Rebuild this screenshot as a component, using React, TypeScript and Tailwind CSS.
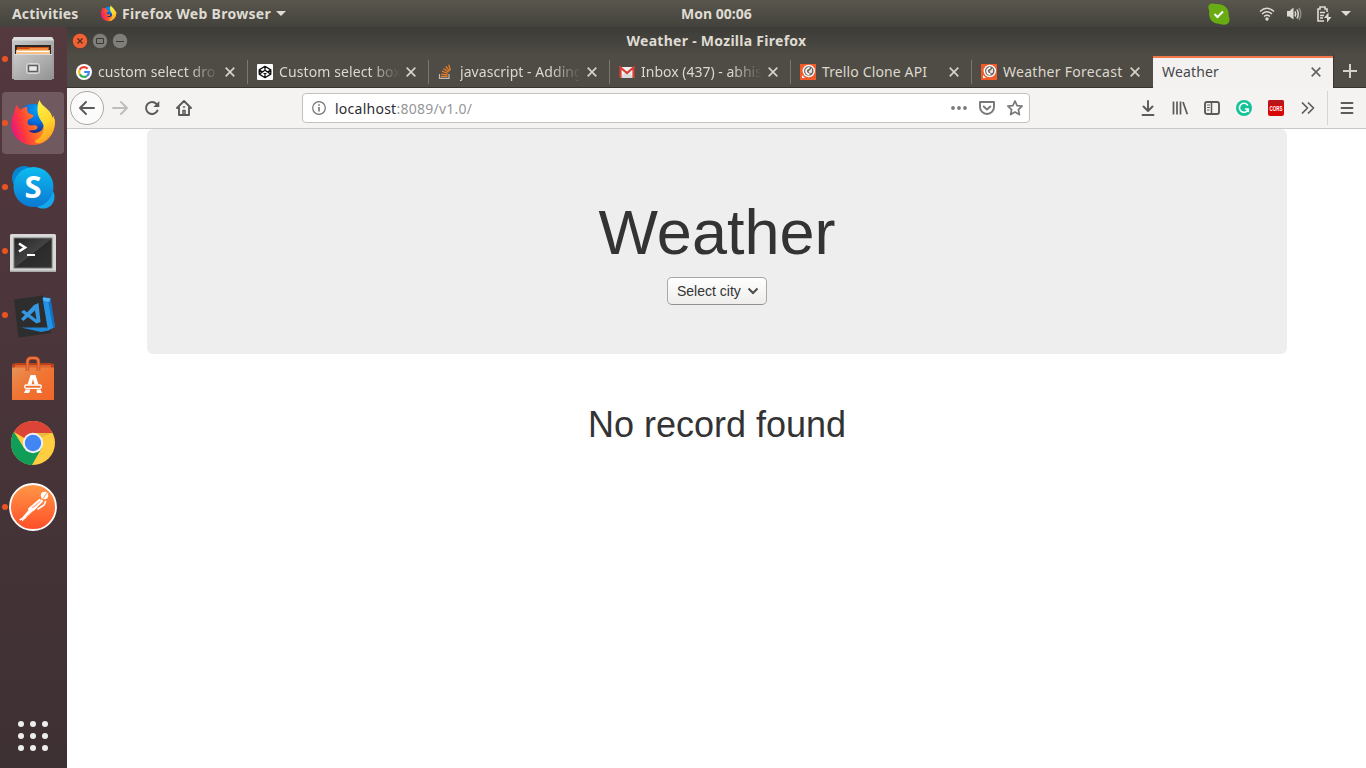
import React from "react";

type IconProps = { s?: number };

function Firefox({ s = 48 }: IconProps) {
  return (
    <svg className="shrink-0" width={s} height={s} viewBox="0 0 48 48">
      <defs>
        <linearGradient id="fxBody" x1="0.05" y1="0.7" x2="0.95" y2="0.45">
          <stop offset="0" stopColor="#e8187c" />
          <stop offset="0.25" stopColor="#ff3a3c" />
          <stop offset="0.6" stopColor="#ff7a22" />
          <stop offset="1" stopColor="#ffb522" />
        </linearGradient>
        <linearGradient id="fxTail" x1="0.3" y1="0" x2="0.6" y2="1">
          <stop offset="0" stopColor="#fff34a" />
          <stop offset="0.55" stopColor="#ffd52b" />
          <stop offset="1" stopColor="#ff981f" />
        </linearGradient>
        <radialGradient id="fxGlobe" cx="0.65" cy="0.15" r="0.75">
          <stop offset="0" stopColor="#00a7f5" />
          <stop offset="0.5" stopColor="#0570e0" />
          <stop offset="1" stopColor="#20207a" />
        </radialGradient>
      </defs>
      <circle cx="24" cy="22" r="17" fill="url(#fxGlobe)" />
      <path d="M8 5.500C8 8 9.500 9.500 11.500 10.500C14 8.500 16.500 8 18.500 8C17.500 10 18 12.500 20 14.500L24.500 16C24.500 18 22.500 19.500 19 21L18.500 24C20 28 24 25.500 27 26.500C30 28 28 31 25 31C23 31 21 32 19 31.500C23 35 29 34.500 33 31L36 24L46 20C47 34 38 46 24 46C11 46 1 36 2.500 22C3 18 4.500 15 5.500 13C5.500 10 6.500 7.500 8 5.500Z" fill="url(#fxBody)" />
      <path d="M30.500 1C32 6 37 8 40.500 12.500C42.500 15 43 17 43.500 19L44.500 16.500C48 27 44 38 33 43.500C29 45 26 44 26 42C34 38 36.500 31 34 25C31.500 20 28.500 18 28.500 10.500C28.500 6 29 3.500 30.500 1Z" fill="url(#fxTail)" />
    </svg>
  );
}

function Files() {
  return (
    <svg width="48" height="48" viewBox="0 0 48 48">
      <defs>
        <linearGradient id="cab" x1="0" y1="0" x2="1" y2="1">
          <stop offset="0" stopColor="#c9c9c9" />
          <stop offset="1" stopColor="#939393" />
        </linearGradient>
      </defs>
      <path d="M5 2h38l2 3v39H3V5Z" fill="url(#cab)" />
      <path d="M5 2h38l2 3.500H3Z" fill="#dedede" />
      <path d="M6 10h36v10H6z" fill="#292725" />
      <path d="M8 12h32v8H7z" fill="#cd4d12" />
      <path d="M8 14h12l1-1h18v3H8z" fill="#f28a42" />
      <path d="M7 15h34v5H7z" fill="#f7c188" />
      <path d="M8 16h32v1H8z" fill="#fff" />
      <path d="M5 19h38v26H5z" fill="url(#cab)" />
      <path d="M5 19h38v1H5z" fill="#d7d7d7" />
      <rect x="17.500" y="28.500" width="13" height="10" rx="2" fill="#b0b0b0" stroke="#d9d9d9" />
      <rect x="19.700" y="30.700" width="8.600" height="5.600" fill="#e8e8e8" stroke="#444" />
    </svg>
  );
}

function Skype() {
  return (
    <svg width="48" height="48" viewBox="0 0 48 48">
      <defs>
        <linearGradient id="sk" x1="0" y1="0" x2="0" y2="1">
          <stop offset="0" stopColor="#0dbcf0" />
          <stop offset="1" stopColor="#0b78d2" />
        </linearGradient>
      </defs>
      <circle cx="15" cy="15" r="12" fill="#0784cf" />
      <circle cx="34" cy="34" r="11.500" fill="#14a8ed" />
      <circle cx="24.500" cy="24" r="20" fill="url(#sk)" />
      <text x="24" y="35" textAnchor="middle" fontFamily="Open Sans, sans-serif" fontWeight="700" fontSize="31" fill="#fff">S</text>
    </svg>
  );
}

function Terminal() {
  return (
    <svg width="48" height="48" viewBox="0 0 48 48">
      <defs>
        <linearGradient id="term" x1="0" y1="0" x2="1" y2="1">
          <stop offset="0" stopColor="#242424" />
          <stop offset="0.5" stopColor="#434343" />
          <stop offset="0.51" stopColor="#2b2b2b" />
          <stop offset="1" stopColor="#323232" />
        </linearGradient>
      </defs>
      <rect x="1" y="7" width="46" height="38" rx="1.500" fill="#d8d8d8" />
      <rect x="1" y="43.500" width="46" height="1.500" fill="#aaa" />
      <rect x="4.500" y="10.500" width="39" height="31" fill="#777" />
      <rect x="5.500" y="11.500" width="37" height="29" fill="url(#term)" />
      <path d="M10 16.500l6 4-6 4" stroke="#fff" strokeWidth="2.600" fill="none" />
      <path d="M18 28h8" stroke="#fff" strokeWidth="2" />
    </svg>
  );
}

function VsCode() {
  return (
    <svg width="48" height="48" viewBox="0 0 48 48">
      <path d="M5 8.500L34 4.500 42 42 9.500 46.500Z" fill="#2d2d2e" />
      <path d="M12 36.500L38 36.500 40 39.500 32 41Z" fill="#2088d8" />
      <path d="M33.500 7l7.500.5L46 36l-7 3.500Z" fill="#2493e6" />
      <path d="M33.500 7L35 6l6.500 1L46 36l-2 1-5-27Z" fill="#1272c0" />
      <path d="M34 6.500L41.500 7.500 40 11 34.500 9.500Z" fill="#57b5f5" />
      <path d="M29.500 12L25 14 12 28l2.500 2L26 19.500l1.500 9L15 19l-3 2 15.500 11.500L31.500 31Z" fill="#3497df" />
    </svg>
  );
}

function Software() {
  return (
    <svg width="48" height="48" viewBox="0 0 48 48">
      <defs>
        <linearGradient id="bag" x1="0" y1="0" x2="1" y2="1">
          <stop offset="0" stopColor="#e79256" />
          <stop offset="0.5" stopColor="#f07432" />
          <stop offset="1" stopColor="#f2652a" />
        </linearGradient>
      </defs>
      <path d="M3 9l4-1h34l4 1v6H3z" fill="#b9421b" />
      <path d="M6 10h36v3H6z" fill="#df6430" />
      <path d="M3 12.500h42V45H3z" fill="url(#bag)" />
      <path d="M18.500 16V7q0-4 4-4h3q4 0 4 4v9" fill="none" stroke="#c4491d" strokeWidth="3.500" />
      <path d="M18.500 16V7q0-4 4-4h3q4 0 4 4v9" fill="none" stroke="#e87543" strokeWidth="2" />
      <path d="M21.500 20h5l3 9.500h-4L24 24l-1.500 5.500h-4Z" fill="#fff" />
      <rect x="15.700" y="30" width="16.600" height="3.400" rx="1.700" fill="#ef702f" stroke="#fff" strokeWidth="1.400" />
      <path d="M16.500 34.500h5L20 38h-5ZM27.500 34.500h4L33 38h-5Z" fill="#fff" />
    </svg>
  );
}

function Chrome() {
  return (
    <svg width="48" height="48" viewBox="0 0 48 48">
      <circle cx="24" cy="24" r="22" fill="#ffcd40" />
      <path d="M24 24L4.950 13A22 22 0 0 1 43.500 14H24Z" fill="#db4437" />
      <path d="M4.950 13A22 22 0 0 0 23 46L33 28.500 24 32 15 29Z" fill="#0f9d58" />
      <path d="M24 14H43.500L33 18Z" fill="#c29d32" opacity=".35" />
      <circle cx="24" cy="24" r="10.200" fill="#f1f1f1" />
      <circle cx="24" cy="24" r="8.200" fill="#4285f4" />
    </svg>
  );
}

function Postman() {
  return (
    <svg width="48" height="48" viewBox="0 0 48 48">
      <defs>
        <linearGradient id="pm" x1="0" y1="0" x2="0" y2="1">
          <stop offset="0" stopColor="#ff9846" />
          <stop offset="1" stopColor="#ff4e28" />
        </linearGradient>
      </defs>
      <circle cx="24" cy="24" r="23" fill="url(#pm)" stroke="#fff" strokeWidth="1.800" />
      <circle cx="35.500" cy="12.500" r="3.700" fill="#fff" />
      <path d="M35.500 13l2.500-3M35.500 13l-1 2.500" stroke="#ff8a42" strokeWidth=".9" />
      <g stroke="#fff" strokeLinecap="round" fill="none">
        <path d="M30.500 17L20 26" strokeWidth="2" />
        <path d="M32.500 18L24 26.500" strokeWidth="3" />
        <path d="M36.500 18.500L35 22l-6 4" strokeWidth="1.600" />
        <path d="M24 26.500L15 35" strokeWidth="2.600" />
        <path d="M22 25.500L13.500 35.500l-2 1" strokeWidth="1.800" />
        <path d="M15 35l-1.500 2.500" strokeWidth="1.200" />
      </g>
      <path d="M31.500 18l-7 6.500M24.500 28L17 34" stroke="#ff7a3c" strokeWidth=".7" />
    </svg>
  );
}

const dock: { icon: React.ReactNode; running: boolean; active?: boolean }[] = [
  { icon: <Files />, running: true },
  { icon: <Firefox />, running: true, active: true },
  { icon: <Skype />, running: true },
  { icon: <Terminal />, running: true },
  { icon: <VsCode />, running: true },
  { icon: <Software />, running: false },
  { icon: <Chrome />, running: false },
  { icon: <Postman />, running: true },
];

function Dock() {
  return (
    <aside className="flex w-[67px] shrink-0 flex-col bg-linear-to-b from-[#54393f] to-[#3d3033]">
      {dock.map((d, i) => (
        <div key={i} className="flex h-16 items-center pr-[3px] pl-[2px]">
          <div className={d.active ? "flex h-[62px] w-[62px] items-center rounded bg-[#705a5f]" : "flex h-[62px] w-[62px] items-center"}>
            <span className={d.running ? "h-1.5 w-1.5 shrink-0 rounded-full bg-[#e95420]" : "h-1.5 w-1.5 shrink-0"} />
            <span className="ml-px shrink-0">{d.icon}</span>
          </div>
        </div>
      ))}
      <div className="mt-auto mb-[17px] ml-[18px] grid w-[30px] grid-cols-3 gap-1.5">
        {Array.from({ length: 9 }, (_, i) => (
          <span key={i} className="h-1.5 w-1.5 rounded-full bg-[#eeeeee]" />
        ))}
      </div>
    </aside>
  );
}

function TopBar() {
  return (
    <header className="flex h-[27px] shrink-0 items-center bg-linear-to-b from-[#59564d] to-[#43423c] text-sm font-bold text-[#dfdbd2]">
      <div className="flex w-[681px] items-center pl-3">
        <span className="w-[88px] whitespace-nowrap tracking-[0.15px]">Activities</span>
        <Firefox s={17} />
        <span className="ml-[5px] w-[154px] whitespace-nowrap tracking-[0.3px]">Firefox Web Browser</span>
        <svg width="10" height="5" viewBox="0 0 10 5"><path d="M0 0h10L5 5Z" fill="#dfdbd2" /></svg>
      </div>
      <span className="whitespace-nowrap">Mon 00:06</span>
      <div className="ml-auto flex items-center pr-[15px]">
        <svg width="22" height="22" viewBox="0 0 22 22">
          <path d="M5 .5Q.500 0 .3 4 .5 6 1.200 8 0 20 11 20.800q2.500 1 6 1 5-1 4.500-6-.5-2-.7-3Q21 2 10 1Q7.500 1 5 .5Z" fill="#68ab13" />
          <path d="M6.500 11l3 3 5.500-5.500" fill="none" stroke="#fff" strokeWidth="2" />
        </svg>
        <svg className="ml-[29px]" width="16" height="16" viewBox="0 0 16 16" fill="none" stroke="#dfdbd2" strokeWidth="1.500">
          <path d="M1 5.500Q8-1 15 5.500M3 8q5-4.500 10 0M5 10.500q3-2.500 6 0" />
          <circle cx="8" cy="13" r="1.700" fill="#dfdbd2" stroke="none" />
        </svg>
        <svg className="ml-[11px]" width="17" height="16" viewBox="0 0 17 16" fill="none" stroke="#dfdbd2" strokeWidth="1.500">
          <path d="M1 5h2.500L7.500 1.500v12L3.500 10.500H1Z" fill="#dfdbd2" stroke="none" />
          <path d="M9 5.500q1.500 2.500 0 5M11 3.500q2.500 4.500 0 9" />
          <path d="M13 2q3.500 6 0 12" opacity=".45" />
        </svg>
        <svg className="ml-[13px]" width="16" height="18" viewBox="0 0 16 18" fill="none" stroke="#dfdbd2" strokeWidth="1.600">
          <path d="M8 16H2V4h2V2h5v2h2v3M4 7.500h5M4 10.500h4M4 13h3" />
          <path d="M12.500 7.500L8 13h3v4.500l4.500-5.500h-3Z" fill="#dfdbd2" stroke="none" />
        </svg>
        <svg className="ml-[9px]" width="10" height="5" viewBox="0 0 10 5"><path d="M0 0h10L5 5Z" fill="#dfdbd2" /></svg>
      </div>
    </header>
  );
}

function TitleBar() {
  return (
    <div className="relative flex h-7 shrink-0 items-center gap-1 bg-linear-to-b from-[#3c3b37] to-[#4e4b44] pl-[5px]">
      <svg width="16" height="16" viewBox="0 0 16 16">
        <circle cx="8" cy="8" r="7.700" fill="#ef6235" stroke="#3a2c26" strokeWidth=".6" />
        <path d="M5.500 5.500l5 5m0-5l-5 5" stroke="#4a2b1e" strokeWidth="1.200" />
      </svg>
      <svg width="16" height="16" viewBox="0 0 16 16">
        <circle cx="8" cy="8" r="7.700" fill="#807e78" stroke="#32312d" strokeWidth=".6" />
        <path d="M4.500 5.500h7v5h-7z" fill="none" stroke="#3a3935" />
      </svg>
      <svg width="16" height="16" viewBox="0 0 16 16">
        <circle cx="8" cy="8" r="7.700" fill="#807e78" stroke="#32312d" strokeWidth=".6" />
        <path d="M4 8.500h8" stroke="#3a3935" />
      </svg>
      <span className="absolute inset-x-0 text-center text-sm font-bold tracking-[0.28px] text-[#dfdbd2]">Weather - Mozilla Firefox</span>
    </div>
  );
}

const favicons: Record<string, React.ReactNode> = {
  google: (
    <svg width="16" height="16" viewBox="0 0 16 16">
      <circle cx="8" cy="8" r="8" fill="#fff" />
      <g fill="none" strokeWidth="2.200">
        <path d="M11.600 4.700A4.900 4.900 0 0 0 3.700 5.700" stroke="#ea4335" />
        <path d="M3.700 5.700a4.900 4.900 0 0 0 0 4.600" stroke="#fbbc05" />
        <path d="M3.700 10.300a4.900 4.900 0 0 0 7.400 1.500" stroke="#34a853" />
        <path d="M11.100 11.800A4.900 4.900 0 0 0 12.900 8H8.200" stroke="#4285f4" />
      </g>
    </svg>
  ),
  codepen: (
    <svg width="16" height="16" viewBox="0 0 16 16">
      <rect width="16" height="16" rx="1" fill="#fff" />
      <path d="M8 2.300l5.800 3.600v4.200L8 13.700 2.200 10.100V5.900ZM8 2.300v3.900m0 3.600v3.900M2.200 5.900L8 9.800l5.800-3.900M2.200 10.100L8 6.200l5.800 3.900" fill="none" stroke="#111" strokeWidth="1.300" strokeLinejoin="round" />
    </svg>
  ),
  stack: (
    <svg width="16" height="16" viewBox="0 0 16 16" fill="none" strokeWidth="1.200">
      <path d="M1.500 10v4.400h9.500V10" stroke="#bcbbbb" />
      <path d="M3 12.300h6.500M3.200 10l6.300.8M3.900 7.300l5.900 1.900M5.400 4.700l5.200 3.300M7.800 2.500l3.800 4.700M10.700 .8l1.800 5.500" stroke="#f48024" />
    </svg>
  ),
  gmail: (
    <svg width="16" height="16" viewBox="0 0 16 16">
      <path d="M1 3h14v11H1z" fill="#f1f1f1" />
      <path d="M1 14L6 9l2 1.500L10 9l5 5Z" fill="#dadada" />
      <path d="M1.500 14V3.500L8 9l6.500-5.500V14" fill="none" stroke="#d93f35" strokeWidth="2.200" />
    </svg>
  ),
  api: (
    <svg width="16" height="16" viewBox="0 0 16 16">
      <path d="M0 0h16v16H0z" fill="#f15a29" />
      <circle cx="8.800" cy="7" r="5.500" fill="#6f6762" stroke="#fff" strokeWidth="1.400" />
      <path d="M9.500 3.500Q5.500 5 6 7.500T9.500 10.500" fill="none" stroke="#fff" strokeWidth="1.500" />
      <path d="M8.500 7.500l3.500-3.500v4.500l-2 1Z" fill="#e8e1dc" />
      <path d="M2 11v3h3Z" fill="#fff" />
    </svg>
  ),
};

const fade = "ml-1.5 w-[121px] shrink-0 whitespace-nowrap mask-r-from-75% ";
const plain = "ml-1.5 w-[121px] shrink-0 whitespace-nowrap ";

const tabs = [
  { icon: "google", label: "custom select dro", style: fade + "tracking-[0.05px]" },
  { icon: "codepen", label: "Custom select box", style: fade + "tracking-[0.1px]" },
  { icon: "stack", label: "javascript - Adding", style: fade + "tracking-[0.05px]" },
  { icon: "gmail", label: "Inbox (437) - abhis", style: fade + "tracking-[0px]" },
  { icon: "api", label: "Trello Clone API", style: plain + "tracking-[0.13px]" },
  { icon: "api", label: "Weather Forecast", style: plain + "tracking-[0.28px]" },
];

function Close({ color }: { color: string }) {
  return (
    <svg className="shrink-0" width="10" height="10" viewBox="0 0 10 10">
      <path d="M.7.7l8.600 8.600m0-8.600L.7 9.300" stroke={color} strokeWidth="1.700" />
    </svg>
  );
}

function TabStrip() {
  return (
    <div className="flex h-[33px] shrink-0 bg-[#4f4c45] text-sm text-[#dcd8cf]">
      {tabs.map((t, i) => (
        <div key={i} className="flex w-[181px] shrink-0 items-center border-b border-[#36342f] pt-px pl-[9px]">
          {favicons[t.icon]}
          <span className={t.style}>{t.label}</span>
          <span className="ml-[6px]"><Close color="#d4d1c8" /></span>
          <span className={i < 5 ? "ml-auto h-6 w-px bg-[#7a776f]" : "ml-auto"} />
        </div>
      ))}
      <div className="mt-px flex w-[180px] shrink-0 items-center border-t-2 border-[#f2784b] bg-[#f3f2f1] pb-[2px] pl-[9px] text-[#47474b]">
        <span className="w-[149px] tracking-[0.15px]">Weather</span>
        <Close color="#67645f" />
      </div>
      <div className="flex flex-1 items-center justify-center border-b border-l border-[#36342f]">
        <svg width="14" height="14" viewBox="0 0 14 14"><path d="M7 0v14M0 7h14" stroke="#d4d1c8" strokeWidth="2" /></svg>
      </div>
    </div>
  );
}

function Tool({ children, color = "#5a5a58" }: { children: React.ReactNode; color?: string }) {
  return (
    <span className="flex w-8 shrink-0 items-center justify-center">
      <svg className="overflow-visible" width="16" height="16" viewBox="0 0 16 16" fill="none" stroke={color} strokeWidth="1.900" strokeLinecap="round" strokeLinejoin="round">{children}</svg>
    </span>
  );
}

function Toolbar() {
  return (
    <div className="flex h-[41px] shrink-0 items-center border-b border-[#cac8c6] bg-[#f4f3f2] pl-[3px]">
      <span className="flex h-[34px] w-[34px] shrink-0 items-center justify-center rounded-full border border-[#a9a8a7] bg-[#fbfbfb]">
        <svg width="16" height="16" viewBox="0 0 16 16" fill="none" stroke="#5a5a58" strokeWidth="1.900" strokeLinecap="round" strokeLinejoin="round">
          <path d="M15 8H1.500M7 2L1 8l6 6" />
        </svg>
      </span>
      <Tool color="#bebdbb"><path d="M1 8h13.500M9 2l6 6-6 6" /></Tool>
      <Tool>
        <path d="M13.500 10.500A6 6 0 1 1 12.500 4" />
        <path d="M15.300 1V7H9.300Z" fill="#5a5a58" stroke="none" />
      </Tool>
      <Tool>
        <path d="M1 8l7-7 7 7M3 7.500V15h10V7.500" />
        <path d="M7 14.500v-4h2v4M7.500 7h1" strokeWidth="1.500" />
      </Tool>
      <div className="ml-[102px] flex h-[30px] w-[728px] shrink-0 items-center rounded border border-[#c3c1bf] bg-white pl-[9px] text-sm">
        <svg width="14" height="14" viewBox="0 0 14 14" fill="none" stroke="#737373">
          <circle cx="7" cy="7" r="6.300" strokeWidth="1.200" />
          <path d="M7 6v4.500M7 3.300v1.500" strokeWidth="1.600" />
        </svg>
        <span className="ml-[9px] whitespace-nowrap pt-px tracking-[0.25px] text-[#96969a]"><span className="text-[#2c2c30]">localhost</span>:8089/v1.0/</span>
        <span className="ml-auto flex items-center gap-3 pr-[6px]">
          <svg width="16" height="16" viewBox="0 0 16 16" fill="#7b7b7b"><circle cx="2" cy="8" r="1.900" /><circle cx="8" cy="8" r="1.900" /><circle cx="14" cy="8" r="1.900" /></svg>
          <svg width="16" height="16" viewBox="0 0 16 16" fill="none" stroke="#777" strokeWidth="1.900" strokeLinecap="round" strokeLinejoin="round"><path d="M1 2h14v5a7 7 0 0 1-14 0ZM4.700 6.500L8 9.600l3.300-3.100" /></svg>
          <svg width="16" height="16" viewBox="0 0 16 16" fill="none" stroke="#777" strokeWidth="1.700" strokeLinejoin="round"><path d="M8 1l2.100 4.600 5 .6-3.700 3.400 1 5L8 12.100l-4.400 2.500 1-5L.9 6.200l5-.6Z" /></svg>
        </span>
      </div>
      <div className="ml-[102px] flex">
        <Tool><path d="M8 1v9.500M3.500 6.500L8 11l4.500-4.500M2.500 15h11" /></Tool>
        <Tool><path d="M1.500 1.500v13M5 1.500v13M8.500 1.500v13M11 2l4.300 12.300" strokeWidth="1.700" strokeLinecap="butt" /></Tool>
        <Tool>
          <rect x="1" y="2" width="14" height="12" rx="2" />
          <path d="M7.500 2v12" strokeWidth="1.500" />
          <path d="M3.500 5h2M3.500 7.500h2M3.500 10h1.500" strokeWidth="1" />
        </Tool>
        <Tool>
          <circle cx="8" cy="8" r="8" fill="#15c39a" stroke="none" />
          <path d="M11.500 5A4.500 4.500 0 1 0 12.300 9H9.500M12.300 9v2.500" stroke="#fff" strokeWidth="1.600" />
        </Tool>
        <Tool>
          <rect width="16" height="16" rx="2" fill="#d90606" stroke="none" />
          <path d="M0 5V2q0-2 2-2h12q2 0 2 2v3Z" fill="#b9151a" stroke="none" />
          <text x="1.500" y="10.800" fontFamily="Liberation Sans, sans-serif" fontWeight="700" fontSize="7.500" textLength="13" lengthAdjust="spacingAndGlyphs" fill="#fff" stroke="none">CORS</text>
        </Tool>
        <Tool><path d="M2.500 3l5 5-5 5M8.500 3l5 5-5 5" strokeWidth="1.700" /></Tool>
      </div>
      <span className="ml-[3px] h-[34px] w-px bg-[#d8d6d4]" />
      <span className="ml-[3px] flex"><Tool><path d="M2.500 3h11M2.500 8h11M2.500 13h11" /></Tool></span>
    </div>
  );
}

function Page() {
  return (
    <main className="flex-1 bg-white pr-[79px] pl-20 text-center font-['Liberation_Sans',Arial,sans-serif] text-[#333333]">
      <section className="flex h-[225px] flex-col items-center rounded-md bg-[#eeeeee] pt-[69px]">
        <h1 className="text-[63px] leading-[69px]">Weather</h1>
        <button className="mt-[10px] flex h-7 w-[100px] items-center rounded-[5px] border border-[#aaa8a5] border-b-[#92908d] bg-linear-to-b from-white to-[#eeedeb] pl-[9px] text-sm">
          <span className="w-[70px] text-left whitespace-nowrap">Select city</span>
          <svg width="12" height="8" viewBox="0 0 12 8"><path d="M1.500 1.500L6 6l4.500-4.500" fill="none" stroke="#4b4b4b" strokeWidth="2" /></svg>
        </button>
      </section>
      <h2 className="mt-[51px] text-[36px] leading-[39.6px]">No record found</h2>
    </main>
  );
}

export default function App() {
  return (
    <div className="flex h-screen w-[1366px] flex-col overflow-hidden font-['Noto_Sans','Open_Sans',sans-serif]">
      <TopBar />
      <div className="flex min-h-0 flex-1">
        <Dock />
        <div className="flex min-w-0 flex-1 flex-col">
          <TitleBar />
          <TabStrip />
          <Toolbar />
          <Page />
        </div>
      </div>
    </div>
  );
}
